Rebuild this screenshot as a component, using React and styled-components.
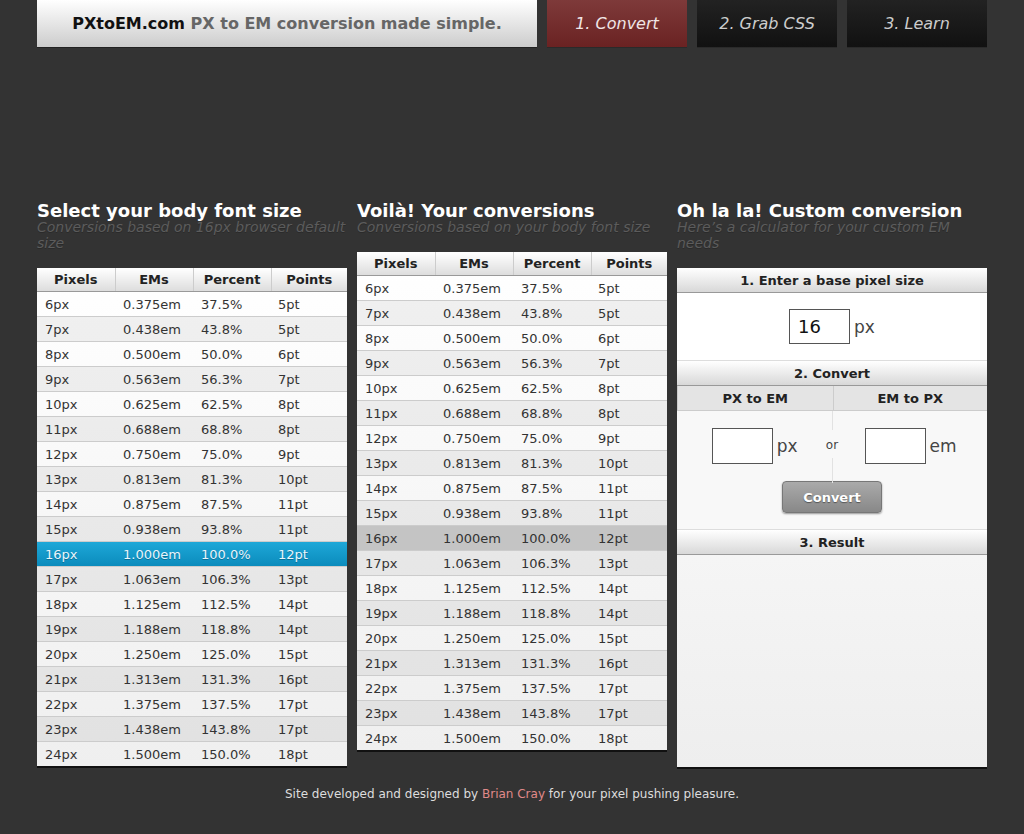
import React from "react";
import styled, { createGlobalStyle } from "styled-components";

const GlobalStyle = createGlobalStyle`
  html, body {
    margin: 0;
    padding: 0;
    background: #333;
    font-family: "DejaVu Sans", Verdana, sans-serif;
  }
`;

const sizes = Array.from({ length: 19 }, (_, i) => i + 6);
const pts = { 6: 5, 7: 5, 8: 6, 9: 7, 10: 8, 11: 8, 12: 9, 13: 10, 14: 11, 15: 11, 16: 12, 17: 13, 18: 14, 19: 14, 20: 15, 21: 16, 22: 17, 23: 17, 24: 18 };

const Page = styled.div`
  width: 950px;
  margin: 0 auto;
`;

const Header = styled.div`
  display: flex;
  gap: 10px;
  height: 48px;
`;

const Logo = styled.div`
  width: 500px;
  height: 47px;
  border-bottom: 1px solid #222;
  background: linear-gradient(#fff, #ccc);
  display: flex;
  align-items: center;
  justify-content: center;
  font-weight: bold;
  font-size: 16px;
  color: #111;
  span {
    color: #666;
  }
`;

const Tab = styled.div`
  width: 140px;
  height: 47px;
  border-bottom: 1px solid #2a2a2a;
  display: flex;
  align-items: center;
  justify-content: center;
  font-style: italic;
  font-size: 16px;
  color: ${(p) => (p.$active ? "#f0e6e6" : "#ccc")};
  background: ${(p) =>
    p.$active
      ? "linear-gradient(#7e3a3a, #6a2222)"
      : "linear-gradient(#222, #111)"};
`;

const Columns = styled.div`
  display: flex;
  gap: 10px;
  align-items: flex-start;
  margin-top: 155px;
`;

const Column = styled.div`
  width: 310px;
`;

const Title = styled.h2`
  margin: 0;
  font-size: 18px;
  line-height: 16px;
  color: #fff;
`;

const Subtitle = styled.p`
  margin: 0 0 17px;
  font-size: 14px;
  line-height: 16px;
  font-style: italic;
  color: #5c5c5c;
  text-shadow: 0 1px 0 #2a2a2a;
`;

const Table = styled.table`
  width: 310px;
  border-collapse: collapse;
  table-layout: fixed;
  background: linear-gradient(#fff, #efefef);
  border-bottom: 2px solid #111;
  font-size: 13px;
  color: #333;
`;

const Th = styled.th`
  height: 23px;
  padding: 0;
  font-size: 13px;
  font-weight: bold;
  color: #222;
  text-align: center;
  background: linear-gradient(#fff, #ddd);
  border-bottom: 1px solid #999;
  border-left: 1px solid #ccc;
  &:first-child {
    border-left: none;
  }
`;

const Tr = styled.tr`
  background: ${(p) =>
    p.$hl === "blue"
      ? "linear-gradient(#1ea8d8, #0a8abb)"
      : p.$hl === "gray"
      ? "#c4c4c4"
      : p.$odd
      ? "rgba(0,0,0,0.055)"
      : "transparent"};
  color: ${(p) => (p.$hl === "blue" ? "#e8f6fc" : "#333")};
  text-shadow: ${(p) => (p.$hl === "blue" ? "0 1px 0 #0a6f96" : "none")};
`;

const Td = styled.td`
  height: 24px;
  padding: 0 0 0 8px;
  border-bottom: 1px solid #ccc;
  &:last-child {
    padding-left: 7px;
  }
`;

const ConvTable = ({ hl }) => (
  <Table>
    <colgroup>
      <col style={{ width: 78 }} />
      <col style={{ width: 78 }} />
      <col style={{ width: 78 }} />
      <col style={{ width: 76 }} />
    </colgroup>
    <thead>
      <tr>
        <Th>Pixels</Th>
        <Th>EMs</Th>
        <Th>Percent</Th>
        <Th>Points</Th>
      </tr>
    </thead>
    <tbody>
      {sizes.map((s, i) => (
        <Tr key={s} $odd={i % 2 === 1} $hl={s === 16 ? hl : null}>
          <Td>{s}px</Td>
          <Td>{(s / 16).toFixed(3)}em</Td>
          <Td>{((s / 16) * 100).toFixed(1)}%</Td>
          <Td>{pts[s]}pt</Td>
        </Tr>
      ))}
    </tbody>
  </Table>
);

const Panel = styled.div`
  width: 310px;
  height: 499px;
  background: #f0f0f0;
  border-bottom: 2px solid #111;
  display: flex;
  flex-direction: column;
`;

const PanelHead = styled.div`
  height: 24px;
  flex: none;
  background: linear-gradient(#fff, #d8d8d8);
  border-bottom: 1px solid #999;
  display: flex;
  align-items: center;
  justify-content: center;
  font-size: 13px;
  font-weight: bold;
  color: #222;
`;

const BaseBody = styled.div`
  height: 67px;
  background: #fff;
  border-bottom: 1px solid #ddd;
  display: flex;
  align-items: center;
  justify-content: center;
  gap: 4px;
`;

const Input = styled.div`
  width: ${(p) => p.$w}px;
  height: ${(p) => p.$h}px;
  box-sizing: border-box;
  border: 1px solid #555;
  background: #fff;
  display: flex;
  align-items: center;
  padding-left: 8px;
  font-size: 18px;
  color: #111;
`;

const Unit = styled.span`
  font-size: 17px;
  color: #444;
`;

const SubHeads = styled.div`
  display: grid;
  grid-template-columns: 1fr 1fr;
  height: 24px;
  background: #e4e4e4;
  border-bottom: 1px solid #ccc;
  border-left: 1px solid #ccc;
`;

const SubHead = styled.div`
  display: flex;
  align-items: center;
  justify-content: center;
  font-size: 13px;
  font-weight: bold;
  color: #222;
  & + & {
    border-left: 1px solid #ccc;
  }
`;

const ConvertBody = styled.div`
  height: 118px;
  background: #f8f8f8;
  border-bottom: 1px solid #ddd;
  display: flex;
  flex-direction: column;
  align-items: center;
`;

const InputsRow = styled.div`
  display: grid;
  grid-template-columns: 1fr 1px 1fr;
  width: 100%;
  height: 70px;
  position: relative;
`;

const Side = styled.div`
  display: flex;
  align-items: center;
  justify-content: ${(p) => (p.$right ? "flex-start" : "flex-end")};
  padding: ${(p) => (p.$right ? "0 0 0 32px" : "0 34px 0 0")};
  gap: 4px;
`;

const Divider = styled.div`
  background: linear-gradient(#e2e2e2 0 27%, transparent 27% 65%, #e2e2e2 65%);
  margin-bottom: -2px;
`;

const Or = styled.span`
  position: absolute;
  left: 50%;
  top: 34px;
  transform: translate(-50%, -50%);
  font-size: 12px;
  color: #444;
`;

const Button = styled.button`
  width: 100px;
  height: 32px;
  border: 1px solid #777;
  border-radius: 4px;
  background: linear-gradient(#aaa, #888);
  box-shadow: 0 1px 2px rgba(0, 0, 0, 0.4);
  color: #fff;
  font-family: inherit;
  font-size: 13px;
  font-weight: bold;
  text-shadow: 0 1px 1px #555;
`;

const ResultBody = styled.div`
  flex: 1;
  background: linear-gradient(#f5f5f5, #eee);
`;

const Footer = styled.p`
  margin: 18px 0 0;
  text-align: center;
  font-size: 12px;
  color: #ddd;
  a {
    color: #e08a8a;
    text-decoration: none;
  }
`;

export default function App() {
  return (
    <>
      <GlobalStyle />
      <Page>
        <Header>
          <Logo>
            PXtoEM.com&nbsp;<span>PX to EM conversion made simple.</span>
          </Logo>
          <Tab $active>1. Convert</Tab>
          <Tab>2. Grab CSS</Tab>
          <Tab>3. Learn</Tab>
        </Header>
        <Columns>
          <Column>
            <Title>Select your body font size</Title>
            <Subtitle>Conversions based on 16px browser default size</Subtitle>
            <ConvTable hl="blue" />
          </Column>
          <Column>
            <Title>Voilà! Your conversions</Title>
            <Subtitle>Conversions based on your body font size</Subtitle>
            <ConvTable hl="gray" />
          </Column>
          <Column>
            <Title>Oh la la! Custom conversion</Title>
            <Subtitle>Here’s a calculator for your custom EM needs</Subtitle>
            <Panel>
              <PanelHead>1. Enter a base pixel size</PanelHead>
              <BaseBody>
                <Input $w={61} $h={35}>16</Input>
                <Unit>px</Unit>
              </BaseBody>
              <PanelHead>2. Convert</PanelHead>
              <SubHeads>
                <SubHead>PX to EM</SubHead>
                <SubHead>EM to PX</SubHead>
              </SubHeads>
              <ConvertBody>
                <InputsRow>
                  <Side>
                    <Input $w={61} $h={36} />
                    <Unit>px</Unit>
                  </Side>
                  <Divider />
                  <Side $right>
                    <Input $w={61} $h={36} />
                    <Unit>em</Unit>
                  </Side>
                  <Or>or</Or>
                </InputsRow>
                <Button>Convert</Button>
              </ConvertBody>
              <PanelHead>3. Result</PanelHead>
              <ResultBody />
            </Panel>
          </Column>
        </Columns>
        <Footer>
          Site developed and designed by <a href="#">Brian Cray</a> for your pixel pushing pleasure.
        </Footer>
      </Page>
    </>
  );
}
